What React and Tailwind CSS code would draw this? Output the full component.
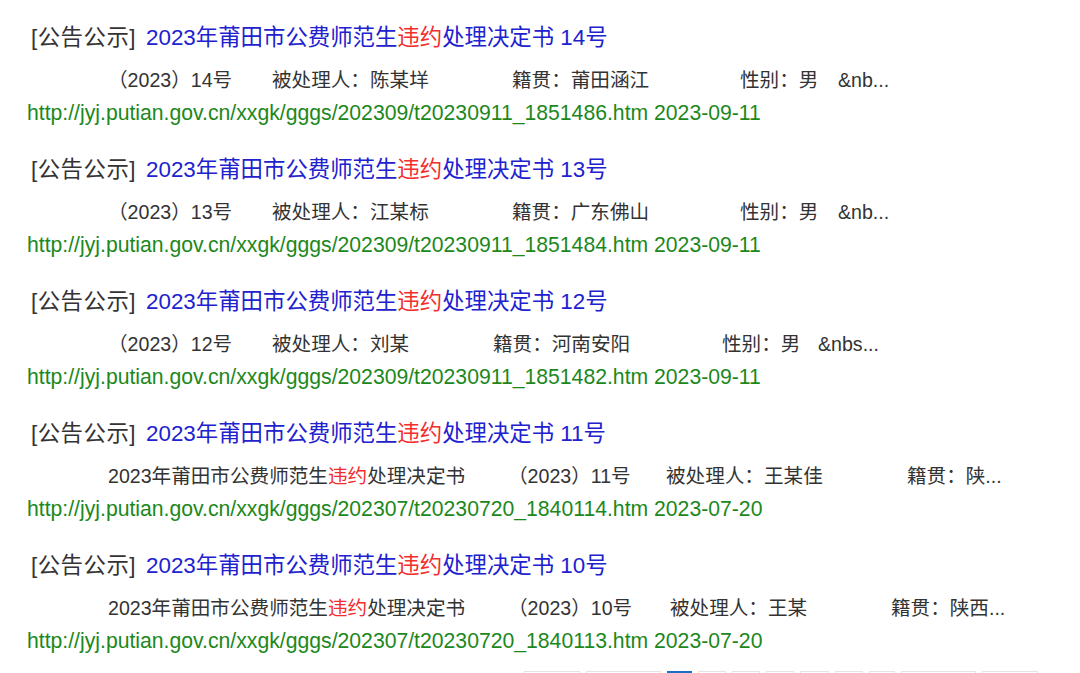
import React from "react";

const FONT = { fontFamily: '"Liberation Sans", "Noto Sans CJK SC", sans-serif' };

const items = [
  {
    num: "14",
    desc: [
      { w: "w-[164px]", t: "（2023）14号" },
      { w: "w-[240px]", t: "被处理人：陈某垟" },
      { w: "w-[228px]", t: "籍贯：莆田涵江" },
      { w: "w-[98px]", t: "性别：男" },
      { w: "", t: "&nb..." },
    ],
    url: "http://jyj.putian.gov.cn/xxgk/gggs/202309/t20230911_1851486.htm 2023-09-11",
  },
  {
    num: "13",
    desc: [
      { w: "w-[164px]", t: "（2023）13号" },
      { w: "w-[240px]", t: "被处理人：江某标" },
      { w: "w-[228px]", t: "籍贯：广东佛山" },
      { w: "w-[98px]", t: "性别：男" },
      { w: "", t: "&nb..." },
    ],
    url: "http://jyj.putian.gov.cn/xxgk/gggs/202309/t20230911_1851484.htm 2023-09-11",
  },
  {
    num: "12",
    desc: [
      { w: "w-[164px]", t: "（2023）12号" },
      { w: "w-[221px]", t: "被处理人：刘某" },
      { w: "w-[229px]", t: "籍贯：河南安阳" },
      { w: "w-[96px]", t: "性别：男" },
      { w: "", t: "&nbs..." },
    ],
    url: "http://jyj.putian.gov.cn/xxgk/gggs/202309/t20230911_1851482.htm 2023-09-11",
  },
  {
    num: "11",
    desc: [
      { w: "w-[400px]", t: "full" },
      { w: "w-[158px]", t: "（2023）11号" },
      { w: "w-[241px]", t: "被处理人：王某佳" },
      { w: "", t: "籍贯：陕..." },
    ],
    url: "http://jyj.putian.gov.cn/xxgk/gggs/202307/t20230720_1840114.htm 2023-07-20",
  },
  {
    num: "10",
    desc: [
      { w: "w-[400px]", t: "full" },
      { w: "w-[162px]", t: "（2023）10号" },
      { w: "w-[221px]", t: "被处理人：王某" },
      { w: "", t: "籍贯：陕西..." },
    ],
    url: "http://jyj.putian.gov.cn/xxgk/gggs/202307/t20230720_1840113.htm 2023-07-20",
  },
];

function FullTitle() {
  return (
    <>
      2023年莆田市公费师范生<span className="text-[#f22d2d]">违约</span>处理决定书
    </>
  );
}

const pages = [
  { w: "w-[56px]" },
  { w: "w-[75px]" },
  { w: "w-[25px]", active: true },
  { w: "w-[28px]" },
  { w: "w-[28px]" },
  { w: "w-[28px]" },
  { w: "w-[29px]" },
  { w: "w-[28px]" },
  { w: "w-[26px]" },
  { w: "w-[75px]" },
  { w: "w-[56px]" },
];

export default function App() {
  return (
    <div className="min-h-screen bg-white overflow-hidden" style={FONT}>
      <div className="pl-[27px] pt-[23px] flex flex-col gap-[27px]">
        {items.map((it) => (
          <div key={it.num} className="flex flex-col">
            <div className="h-[30px] leading-[30px] text-[22.4px] whitespace-nowrap pl-[4px] flex">
              <span className="text-[#333333] tracking-[0.5px] mr-[10px]">[公告公示]</span>
              <span className="text-[#2121cf]">
                <FullTitle /> {it.num}号
              </span>
            </div>
            <div className="mt-[12px] h-[30px] leading-[30px] text-[19.6px] text-[#333333] flex whitespace-nowrap pl-[81px]">
              {it.desc.map((d, i) => (
                <span key={i} className={`${d.w} shrink-0`}>
                  {d.t === "full" ? <FullTitle /> : d.t}
                </span>
              ))}
            </div>
            <div className="mt-[3px] h-[30px] leading-[30px] text-[21.2px] text-[#1c881c] whitespace-nowrap">
              {it.url}
            </div>
          </div>
        ))}
      </div>
      <div className="mt-[15px] flex gap-[6px] pl-[524px]">
        {pages.map((p, i) => (
          <div
            key={i}
            className={`${p.w} h-[28px] shrink-0 ${
              p.active ? "bg-[#1d6fc6] border border-[#1d6fc6]" : "bg-white border border-[#e4e4e4]"
            }`}
          />
        ))}
      </div>
    </div>
  );
}
